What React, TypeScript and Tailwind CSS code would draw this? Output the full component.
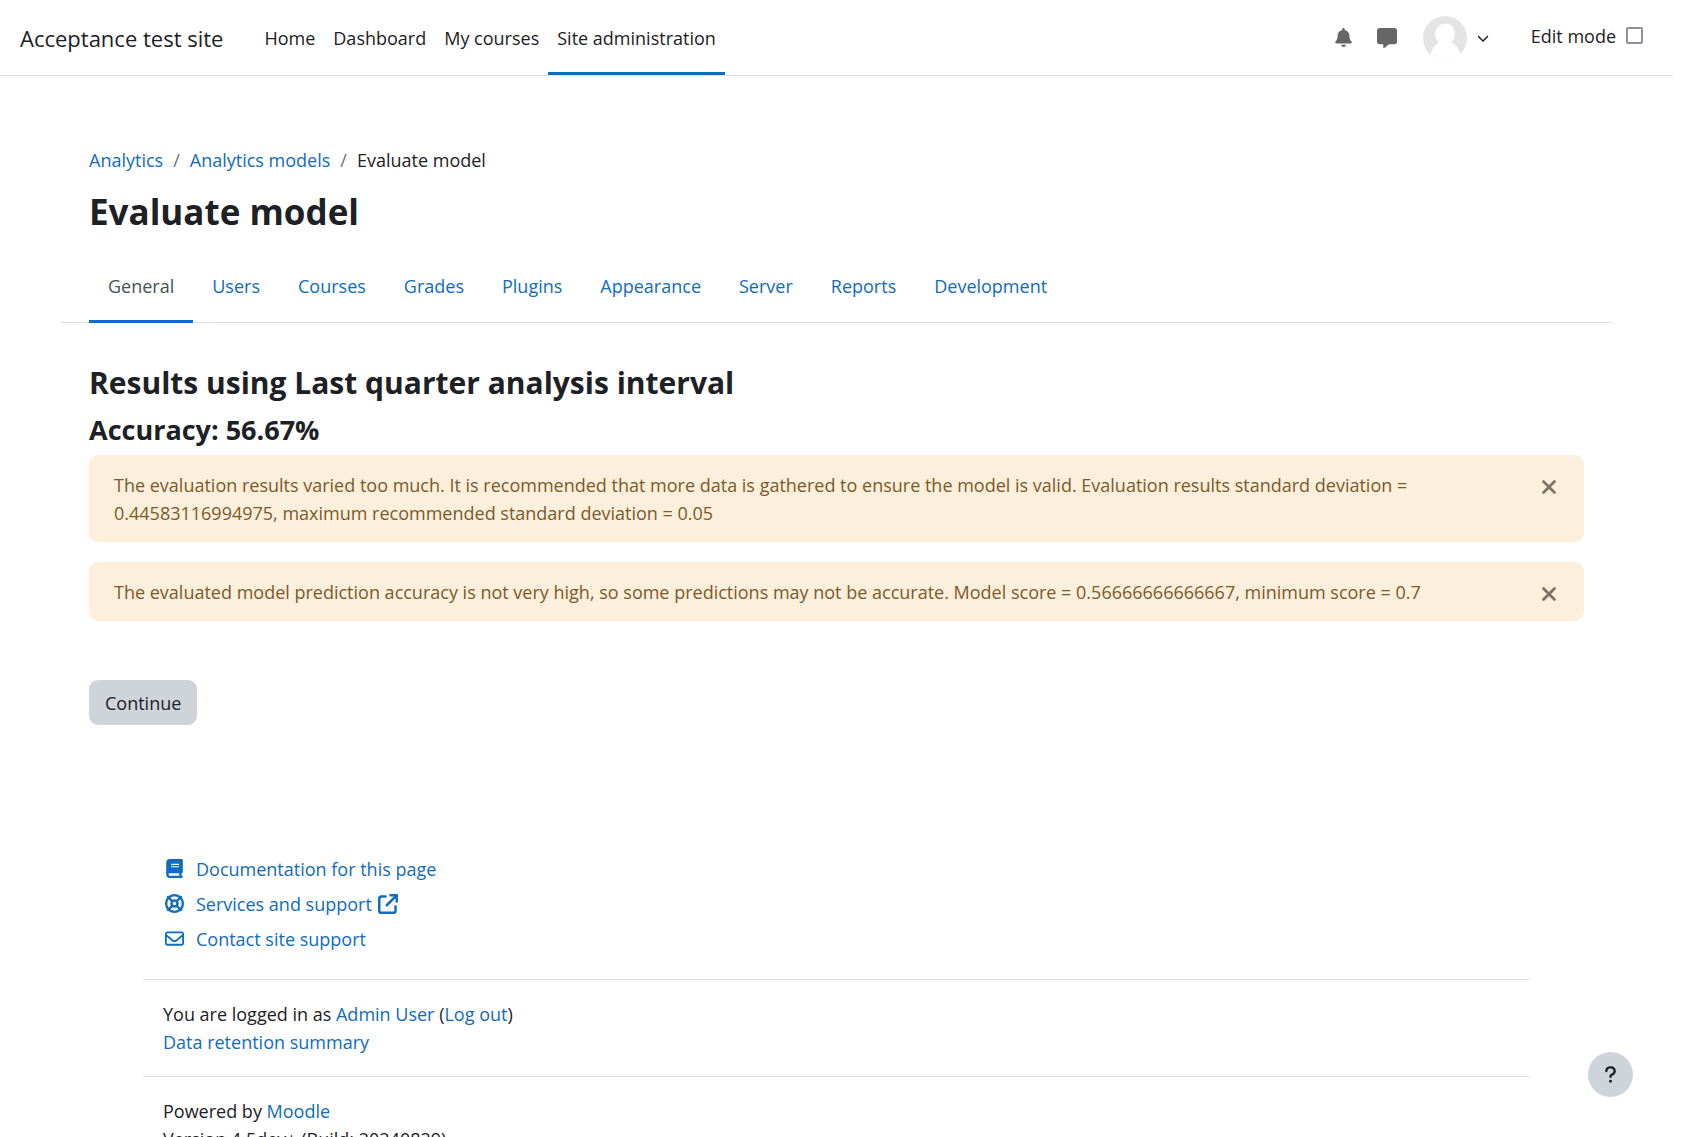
import React from 'react';
import {
  FaArrowUpRightFromSquare,
  FaBell,
  FaBook,
  FaChevronDown,
  FaLifeRing,
  FaMessage,
  FaQuestion,
  FaRegEnvelope,
} from 'react-icons/fa6';
import { X } from 'lucide-react';

const navItems = ['Home', 'Dashboard', 'My courses', 'Site administration'];

const tabs = [
  'General',
  'Users',
  'Courses',
  'Grades',
  'Plugins',
  'Appearance',
  'Server',
  'Reports',
  'Development',
];

const warnings = [
  'The evaluation results varied too much. It is recommended that more data is gathered to ensure the model is valid. Evaluation results standard deviation = 0.44583116994975, maximum recommended standard deviation = 0.05',
  'The evaluated model prediction accuracy is not very high, so some predictions may not be accurate. Model score = 0.56666666666667, minimum score = 0.7',
];

const supportLinks = [
  { label: 'Documentation for this page', icon: FaBook, external: false },
  { label: 'Services and support', icon: FaLifeRing, external: true },
  { label: 'Contact site support', icon: FaRegEnvelope, external: false },
];

const TextLink: React.FC<{ children: React.ReactNode }> = ({ children }) => (
  <a href="#" className="text-[#0f6cbf] hover:underline">
    {children}
  </a>
);

const Avatar: React.FC = () => (
  <svg viewBox="0 0 44 44" className="size-11" aria-hidden="true">
    <defs>
      <clipPath id="avatar-clip">
        <circle cx="22" cy="22" r="22" />
      </clipPath>
    </defs>
    <g clipPath="url(#avatar-clip)">
      <rect width="44" height="44" fill="#e4e4e4" />
      <ellipse cx="22" cy="18" rx="10" ry="10.5" fill="#fff" />
      <path d="M7 39c2-6 5-10.5 9.500-13 3.500 2.500 8 2.500 11.500 0 5 2.500 8 7 9.500 13v6H7z" fill="#fff" />
    </g>
  </svg>
);

const Header: React.FC = () => (
  <header className="flex h-19 items-stretch border-b border-[#dee2e6] pl-5 pr-[30px]">
    <a href="#" className="mr-8 flex items-center text-[22px]">
      Acceptance test site
    </a>
    <nav className="flex">
      {navItems.map((item) => (
        <a
          key={item}
          href="#"
          className={
            item === 'Site administration'
              ? 'flex items-center border-b-3 border-[#0f6cbf] px-[9px] pt-1'
              : 'flex items-center border-b-3 border-transparent px-[9px] pt-1'
          }
        >
          {item}
        </a>
      ))}
    </nav>
    <div className="ml-auto flex items-center">
      <button type="button" aria-label="Notifications" className="mr-6 text-[#666]">
        <FaBell size={19} />
      </button>
      <button type="button" aria-label="Messages" className="mr-[26px] text-[#666]">
        <FaMessage size={20} />
      </button>
      <button type="button" aria-label="User menu" className="mr-[42px] flex items-center gap-2.5">
        <Avatar />
        <FaChevronDown size={12} />
      </button>
      <div className="flex items-center gap-2.5 pb-1">
        <label htmlFor="edit-mode">Edit mode</label>
        <input
          id="edit-mode"
          type="checkbox"
          className="size-[17px] appearance-none rounded-xs border-2 border-[#8f8f9d] bg-white"
        />
      </div>
    </div>
  </header>
);

const Breadcrumb: React.FC = () => (
  <nav aria-label="Breadcrumb">
    <ol className="flex gap-2.5">
      <li>
        <TextLink>Analytics</TextLink>
      </li>
      <li className="text-[#6a737b]">/</li>
      <li>
        <TextLink>Analytics models</TextLink>
      </li>
      <li className="text-[#6a737b]">/</li>
      <li>Evaluate model</li>
    </ol>
  </nav>
);

const Tabs: React.FC = () => (
  <nav className="-mx-7 mt-4 flex border-b border-[#dee2e6] px-7">
    {tabs.map((tab) => (
      <a
        key={tab}
        href="#"
        className={
          tab === 'General'
            ? '-mb-px border-b-3 border-[#0f6cbf] px-[19px] py-5 text-[#495057]'
            : '-mb-px border-b-3 border-transparent px-[19px] py-5 text-[#0f6cbf]'
        }
      >
        {tab}
      </a>
    ))}
  </nav>
);

const Footer: React.FC = () => (
  <footer className="mx-[143px] mt-[126px]">
    <ul className="px-5 pb-[23px]">
      {supportLinks.map(({ label, icon: Icon, external }) => (
        <li key={label} className="flex h-[35px] items-center">
          <a href="#" className="flex items-center text-[#0f6cbf]">
            <Icon size={19} className="mx-0.5" />
            <span className="ml-2.5">{label}</span>
            {external && <FaArrowUpRightFromSquare size={20} className="ml-1.5" />}
          </a>
        </li>
      ))}
    </ul>
    <div className="border-t border-[#dee2e6] px-5 py-5">
      <p>
        You are logged in as <TextLink>Admin User</TextLink> (<TextLink>Log out</TextLink>)
      </p>
      <p>
        <TextLink>Data retention summary</TextLink>
      </p>
    </div>
    <div className="border-t border-[#dee2e6] px-5 py-5">
      <p>
        Powered by <TextLink>Moodle</TextLink>
      </p>
      <p>Version 4.5dev+ (Build: 20240829)</p>
    </div>
  </footer>
);

const App: React.FC = () => {
  return (
    <div className="h-screen overflow-y-auto bg-white pr-5 font-['Open_Sans',sans-serif] text-[18px] leading-7 text-[#1d2125] [scrollbar-width:none]">
      <Header />
      <main className="px-[89px] pt-[70px]">
        <Breadcrumb />
        <h1 className="mt-3.5 text-[35px] leading-12 font-bold">Evaluate model</h1>
        <Tabs />
        <h2 className="mt-[38px] text-[30px] leading-11 font-bold">
          Results using Last quarter analysis interval
        </h2>
        <h3 className="my-[7px] text-[27px] leading-9 font-bold">Accuracy: 56.67%</h3>
        <div className="flex flex-col gap-5">
          {warnings.map((warning) => (
            <div
              key={warning}
              role="alert"
              className="flex items-start rounded-[9px] bg-[#fcefdc] pt-4 pr-6 pb-[15px] pl-[25px] text-[#7d5a29]"
            >
              <p className="flex-1 pr-12">{warning}</p>
              <button
                type="button"
                aria-label="Dismiss this notification"
                className="flex h-7 items-center pt-1 text-[#7e7365]"
              >
                <X size={22} strokeWidth={3} />
              </button>
            </div>
          ))}
        </div>
        <button type="button" className="mt-[59px] h-[45px] rounded-[9px] bg-[#ced4da] px-4">
          Continue
        </button>
      </main>
      <Footer />
      <button
        type="button"
        aria-label="Show footer"
        className="fixed right-[60px] bottom-10 flex size-[45px] items-center justify-center rounded-full bg-[#ced4da]"
      >
        <FaQuestion size={19} />
      </button>
    </div>
  );
};

export default App;
